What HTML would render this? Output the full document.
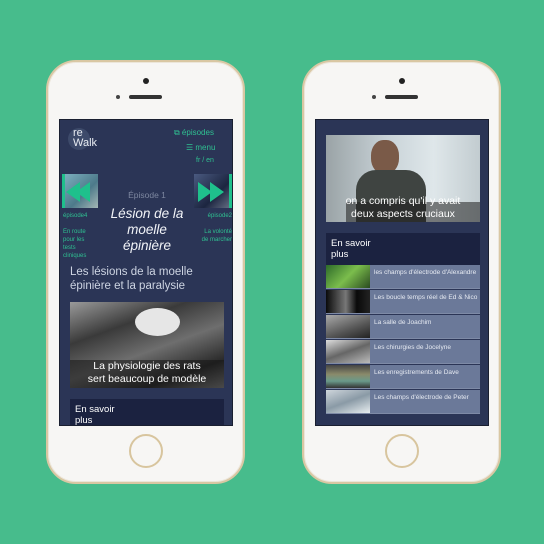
<!DOCTYPE html>
<html><head><meta charset="utf-8"><style>
*{margin:0;padding:0;box-sizing:border-box}
body{width:544px;height:544px;background:#47bc8c;position:relative;overflow:hidden;font-family:"Liberation Sans",sans-serif}
.phone{position:absolute;top:60px;width:199px;height:424px;border-radius:30px;background:#f7f6f4;border:2px solid #d9c7a3;box-shadow:inset 0 0 0 1px #ece6da}
.screen{position:absolute;top:119px;width:174px;height:307px;background:#2b3556;border:1px solid #1a1f30;overflow:hidden}
.abs{position:absolute}
.home{position:absolute;width:34px;height:34px;border-radius:50%;border:2px solid #d8c59e;background:#f7f6f4}
.cam{position:absolute;width:6px;height:6px;border-radius:50%;background:#222}
.spk{position:absolute;height:4px;border-radius:2px;background:#333}
.dot{position:absolute;width:4px;height:4px;border-radius:50%;background:#444}
.g{color:#2fc091}
.row{position:absolute;left:10px;width:154px;height:24px;background:#6b7999;border-bottom:1px solid #7e8aa6}
.row .t{position:absolute;left:0;top:0;width:44px;height:23px}
.row span{position:absolute;left:48px;top:4px;font-size:6.5px;color:#e6eaf2;line-height:8px;width:104px}
</style></head><body>

<div class="phone" style="left:46px"></div>
<div class="cam" style="left:143px;top:78px"></div>
<div class="dot" style="left:116px;top:95px"></div>
<div class="spk" style="left:129px;top:95px;width:33px"></div>
<div class="home" style="left:129px;top:434px"></div>

<div class="phone" style="left:302px"></div>
<div class="cam" style="left:399px;top:78px"></div>
<div class="dot" style="left:372px;top:95px"></div>
<div class="spk" style="left:385px;top:95px;width:33px"></div>
<div class="home" style="left:385px;top:434px"></div>

<!-- left screen -->
<div class="screen" style="left:59px">
 <div class="abs" style="left:8px;top:8px;width:22px;height:22px;border-radius:50%;background:#3d4a6a"></div>
 <div class="abs" style="left:13px;top:8px;color:#e8ecf2;font-size:11px;line-height:10px">re<br>Walk</div>
 <div class="abs g" style="left:114px;top:8px;font-size:8px">⧉ épisodes</div>
 <div class="abs g" style="left:126px;top:23px;font-size:8px">☰ menu</div>
 <div class="abs g" style="left:136px;top:37px;font-size:7px">fr / en</div>
 <div class="abs" style="left:2px;top:54px;width:36px;height:34px;background:linear-gradient(135deg,#7fb3c2,#4d7a8a 60%,#a5b7b6)"></div>
 <div class="abs" style="left:6px;top:62px;width:0;height:0;border-top:10px solid transparent;border-bottom:10px solid transparent;border-right:14px solid #1fc08c"></div>
 <div class="abs" style="left:16px;top:62px;width:0;height:0;border-top:10px solid transparent;border-bottom:10px solid transparent;border-right:14px solid #1fc08c"></div>
 <div class="abs" style="left:2px;top:54px;width:3px;height:34px;background:#1fc08c"></div>
 <div class="abs" style="left:134px;top:54px;width:38px;height:34px;background:linear-gradient(135deg,#4a5a80,#1c2540 60%,#6a7488)"></div>
 <div class="abs" style="left:138px;top:62px;width:0;height:0;border-top:10px solid transparent;border-bottom:10px solid transparent;border-left:14px solid #1fc08c"></div>
 <div class="abs" style="left:150px;top:62px;width:0;height:0;border-top:10px solid transparent;border-bottom:10px solid transparent;border-left:14px solid #1fc08c"></div>
 <div class="abs" style="left:169px;top:54px;width:3px;height:34px;background:#1fc08c"></div>
 <div class="abs g" style="left:3px;top:92px;font-size:6px;line-height:8px">épisode4<br><br>En route<br>pour les<br>tests<br>cliniques</div>
 <div class="abs g" style="left:128px;top:92px;font-size:6px;line-height:8px;text-align:right;width:44px">épisode2<br><br>La volonté<br>de marcher</div>
 <div class="abs" style="left:40px;top:70px;width:94px;text-align:center;color:#7d87a0;font-size:8.5px">Épisode 1</div>
 <div class="abs" style="left:46px;top:86px;width:82px;text-align:center;color:#f2f4f8;font-size:13.5px;font-style:italic;line-height:16px">Lésion de la moelle épinière</div>
 <div class="abs" style="left:10px;top:145px;color:#cdd4e2;font-size:11.5px;line-height:14px;width:150px">Les lésions de la moelle épinière et la paralysie</div>
 <div class="abs" style="left:10px;top:182px;width:154px;height:86px;background:linear-gradient(160deg,#9a9a9a 0%,#3a3a3a 30%,#6e6e6e 55%,#2a2a2a 80%,#8a8a8a 100%)"></div>
 <div class="abs" style="left:75px;top:188px;width:45px;height:28px;border-radius:50%;background:#e6e6e6"></div>
 <div class="abs" style="left:10px;top:240px;width:154px;height:28px;background:rgba(20,20,20,.55)"></div>
 <div class="abs" style="left:10px;top:240px;width:154px;text-align:center;color:#fff;font-size:10.5px;line-height:13px">La physiologie des rats<br>sert beaucoup de modèle</div>
 <div class="abs" style="left:10px;top:279px;width:154px;height:30px;background:#1b2240"></div>
 <div class="abs" style="left:15px;top:284px;color:#fff;font-size:9.5px;line-height:11px">En savoir<br>plus</div>
</div>

<!-- right screen -->
<div class="screen" style="left:315px">
 <div class="abs" style="left:10px;top:15px;width:154px;height:87px;background:linear-gradient(90deg,#9aa3a6 0%,#c9d3d8 40%,#dfe7ea 70%,#c2ccd0 100%)"></div>
 <div class="abs" style="left:55px;top:20px;width:28px;height:34px;border-radius:45%;background:#7a5a48"></div>
 <div class="abs" style="left:40px;top:50px;width:70px;height:52px;border-radius:20px 20px 0 0;background:#3f4441"></div>
 <div class="abs" style="left:30px;top:82px;width:134px;height:20px;background:rgba(30,30,30,.55)"></div>
 <div class="abs" style="left:10px;top:75px;width:154px;text-align:center;color:#fff;font-size:10.5px;line-height:13px">on a compris qu'il y avait<br>deux aspects cruciaux</div>
 <div class="abs" style="left:10px;top:113px;width:154px;height:32px;background:#1b2240"></div>
 <div class="abs" style="left:15px;top:118px;color:#fff;font-size:9.5px;line-height:11px">En savoir<br>plus</div>
 <div class="row" style="top:145px"><div class="t" style="background:linear-gradient(135deg,#2d6a2a,#7bbd4c,#2a4a20)"></div><span>les champs d'électrode d'Alexandre</span></div>
 <div class="row" style="top:170px"><div class="t" style="background:linear-gradient(90deg,#0a0a0a,#777 45%,#0a0a0a 70%,#222)"></div><span>Les boucle temps réel de Ed &amp; Nico</span></div>
 <div class="row" style="top:195px"><div class="t" style="background:linear-gradient(160deg,#aaa,#555 60%,#222)"></div><span>La salle de Joachim</span></div>
 <div class="row" style="top:220px"><div class="t" style="background:linear-gradient(160deg,#ddd,#666 50%,#bbb)"></div><span>Les chirurgies de Jocelyne</span></div>
 <div class="row" style="top:245px"><div class="t" style="background:linear-gradient(180deg,#444,#8a8a6a 40%,#6a9a8a 70%,#333)"></div><span>Les enregistrements de Dave</span></div>
 <div class="row" style="top:270px"><div class="t" style="background:linear-gradient(160deg,#cfd6dc,#8a9aa6 50%,#e8eef0)"></div><span>Les champs d'électrode de Peter</span></div>
</div>
</body></html>
